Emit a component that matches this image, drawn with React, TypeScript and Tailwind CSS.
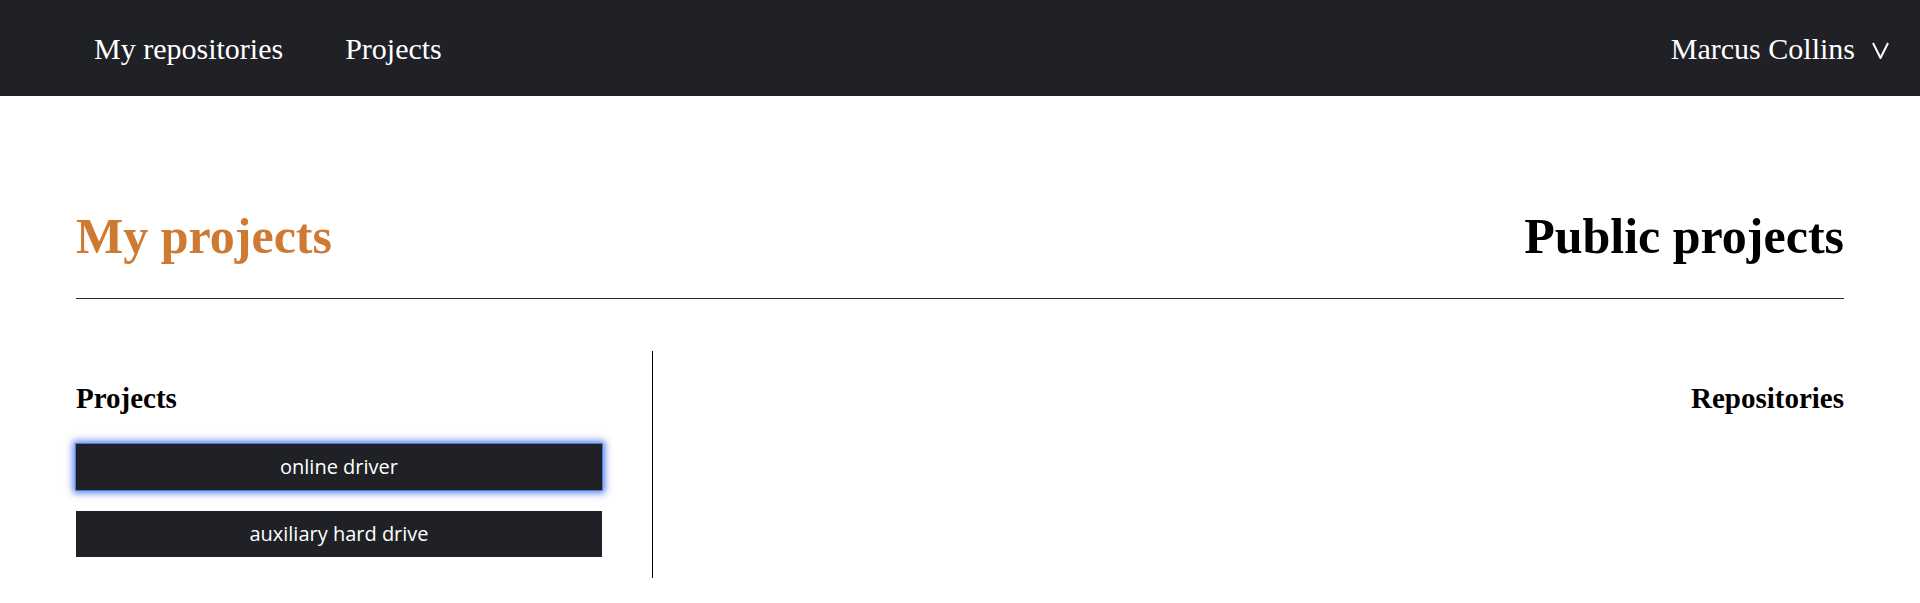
import React from 'react';

const serif = { fontFamily: '"Liberation Serif", "Times New Roman", serif' };

function NavBar() {
  return (
    <nav className="h-[96px] bg-[#1f2126] flex items-center justify-between pl-[94px] pr-[31px] text-white" style={serif}>
      <div className="flex items-center gap-[62px] text-[30px] leading-[33px]">
        <a href="#">My repositories</a>
        <a href="#">Projects</a>
      </div>
      <button className="flex items-center gap-[17px] text-[30px] leading-[33px] cursor-pointer">
        <span>Marcus Collins</span>
        <svg width="17" height="17" viewBox="0 0 17 17" className="mt-[5px]" fill="none" stroke="white" strokeWidth="2">
          <polyline points="1,1 8.5,16 16,1" />
        </svg>
      </button>
    </nav>
  );
}

function ProjectButton({ label, active }: { label: string; active?: boolean }) {
  return (
    <button
      className={
        active
          ? 'w-[526px] h-[46px] bg-[#1f2126] text-white text-[20px] shadow-[0_0_0_1px_#4a7be0,0_0_7px_3px_rgba(66,112,224,0.9)] cursor-pointer'
          : 'w-[526px] h-[46px] bg-[#1f2126] text-white text-[20px] cursor-pointer'
      }
      style={{ fontFamily: '"Open Sans", "Noto Sans", sans-serif' }}
    >
      {label}
    </button>
  );
}

export default function App() {
  return (
    <div className="min-h-screen bg-white text-black">
      <NavBar />
      <main className="px-[76px]" style={serif}>
        <div className="flex items-start justify-between pt-[113px] pb-[34px] border-b border-[#2a2a2a]">
          <h1 className="text-[50px] leading-[55px] font-bold text-[#cf7a32]">My projects</h1>
          <h1 className="text-[50px] leading-[55px] font-bold">Public projects</h1>
        </div>
        <div className="flex mt-[52px]">
          <section className="w-[577px] border-r border-black pt-[31px] pb-[21px]">
            <h2 className="text-[29px] leading-[32px] font-bold">Projects</h2>
            <div className="flex flex-col gap-[21px] mt-[30px]">
              <ProjectButton label="online driver" active />
              <ProjectButton label="auxiliary hard drive" />
            </div>
          </section>
          <section className="flex-1 pt-[31px] text-right">
            <h2 className="text-[29px] leading-[32px] font-bold">Repositories</h2>
          </section>
        </div>
      </main>
    </div>
  );
}
